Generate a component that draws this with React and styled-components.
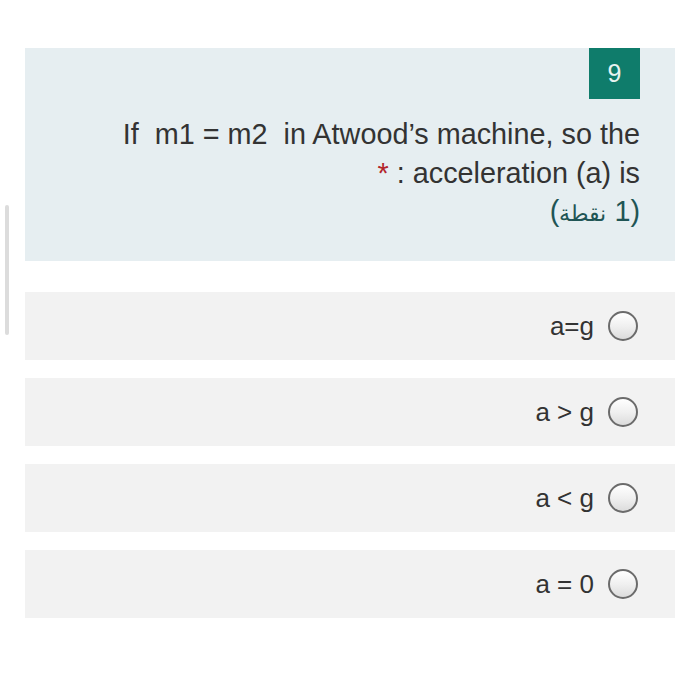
import React from "react";
import styled, { createGlobalStyle } from "styled-components";

const Global = createGlobalStyle`
  html, body { margin: 0; padding: 0; background: #ffffff; }
  body { font-family: "Liberation Sans", Arial, sans-serif; }
`;

const Page = styled.div`
  position: relative;
  width: 700px;
  height: 690px;
  box-sizing: border-box;
  padding: 48px 25px 0 25px;
  background: #fff;
`;

const ScrollThumb = styled.div`
  position: absolute;
  left: 5px;
  top: 205px;
  width: 4px;
  height: 130px;
  border-radius: 2px;
  background: #dcdcdc;
`;

const QuestionCard = styled.section`
  background: #e6eef1;
  height: 213px;
  box-sizing: border-box;
  padding: 0 35px 0 35px;
  display: flex;
  flex-direction: column;
  align-items: flex-end;
`;

const Badge = styled.div`
  width: 51px;
  height: 51px;
  background: #0f7c6b;
  color: #e8f4f1;
  font-size: 25px;
  display: flex;
  align-items: center;
  justify-content: center;
`;

const QuestionText = styled.div`
  margin-top: 16px;
  text-align: right;
  color: #333;
  font-size: 28.8px;
  line-height: 38.5px;
`;

const Line = styled.div``;

const Star = styled.span`
  color: #b3262c;
`;

const Points = styled.div`
  color: #1f5555;
  direction: rtl;
`;

const ArabicWord = styled.span`
  font-size: 0.78em;
`;

const Options = styled.div`
  margin-top: 31px;
  display: flex;
  flex-direction: column;
  gap: 18px;
`;

const OptionRow = styled.label`
  height: 68px;
  background: #f2f2f2;
  display: flex;
  align-items: center;
  justify-content: flex-end;
  gap: 14px;
  padding-right: 37px;
  box-sizing: border-box;
  color: #333;
  font-size: 26px;
`;

const Radio = styled.span`
  width: 30px;
  height: 30px;
  box-sizing: border-box;
  border-radius: 50%;
  border: 2px solid #6b6b6b;
  background: linear-gradient(180deg, #ffffff 0%, #f0f0f0 50%, #dcdcdc 100%);
`;

const options = ["a=g", "a > g", "a < g", "a = 0"];

export default function App() {
  return (
    <>
      <Global />
      <Page>
        <ScrollThumb />
        <QuestionCard>
          <Badge>9</Badge>
          <QuestionText>
            <Line>If&nbsp; m1 = m2&nbsp; in Atwood’s machine, so the</Line>
            <Line>
              <Star>*</Star> : acceleration (a) is
            </Line>
            <Points>
              (1 <ArabicWord>نقطة</ArabicWord>)
            </Points>
          </QuestionText>
        </QuestionCard>
        <Options>
          {options.map((o) => (
            <OptionRow key={o}>
              <span>{o}</span>
              <Radio />
            </OptionRow>
          ))}
        </Options>
      </Page>
    </>
  );
}
